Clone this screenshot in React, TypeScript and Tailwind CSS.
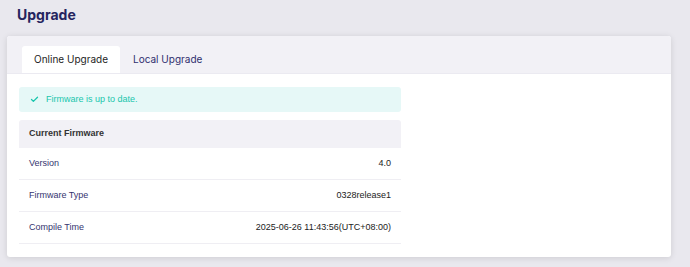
import { Check } from 'lucide-react';

const rows = [
  { label: 'Version', value: '4.0' },
  { label: 'Firmware Type', value: '0328release1' },
  { label: 'Compile Time', value: '2025-06-26 11:43:56(UTC+08:00)' },
];

export default function App() {
  return (
    <div className="w-[690px] h-[267px] bg-[#e9e8ee] px-[7px] overflow-hidden font-['Inter',sans-serif]">
      {/* Title */}
      <div className="h-[36px] pl-[10px] flex items-center">
        <h1 className="text-[14px] font-bold text-[#25245e] leading-none -mt-[6px]">Upgrade</h1>
      </div>

      {/* Card */}
      <div className="w-[664px] bg-white rounded-[3px] shadow-[0_1px_6px_rgba(0,0,0,0.12)] overflow-hidden">
        {/* Tabs */}
        <div className="h-[38px] bg-[#f2f1f6] border-b border-[#ebeaf1] flex items-end pl-[15px]">
          <div className="h-[27px] w-[98px] bg-white rounded-t-[3px] flex items-center justify-center text-[10px] text-[#1d1d1d]">
            Online Upgrade
          </div>
          <div className="h-[27px] px-[13px] flex items-center text-[10px] text-[#2f2e6e]">
            Local Upgrade
          </div>
        </div>

        {/* Body */}
        <div className="px-[12px] pt-[13px] pb-[13px] font-['Liberation_Sans',sans-serif]">
          <div className="w-[382px]">
            <div className="h-[25px] bg-[#e6f8f7] rounded-[3px] flex items-center pl-[11px] gap-[7px] text-[9px] text-[#19c6ad]">
              <Check size={9} strokeWidth={3.5} />
              <span>Firmware is up to date.</span>
            </div>

            <div className="mt-[8px] h-[28px] bg-[#f2f1f6] rounded-t-[3px] flex items-center px-[10px] text-[9px] font-bold text-[#333]">
              Current Firmware
            </div>

            {rows.map((r) => (
              <div
                key={r.label}
                className="h-[32px] border-b border-[#efeef3] flex items-center justify-between px-[10px] text-[9px]"
              >
                <span className="text-[#35346f]">{r.label}</span>
                <span className="text-[#222]">{r.value}</span>
              </div>
            ))}
          </div>
        </div>
      </div>
    </div>
  );
}
